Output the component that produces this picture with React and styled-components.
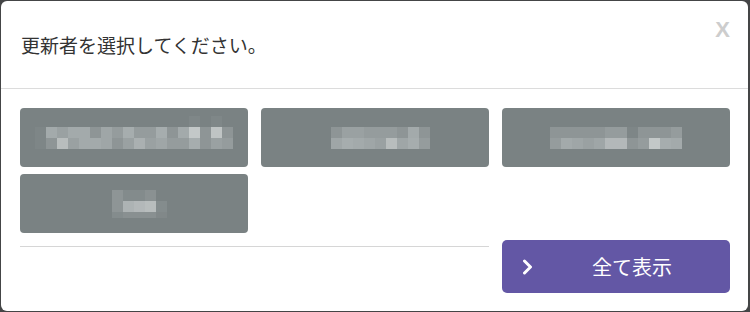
import React from 'react'
import styled, { createGlobalStyle } from 'styled-components'

const GlobalStyle = createGlobalStyle`
  html, body {
    margin: 0;
    padding: 0;
    background: #444546;
  }
  body {
    font-family: "Noto Sans CJK JP", "Noto Sans", sans-serif;
  }
`;

const Frame = styled.div`
  padding: 1px 2px 1px 1px;
`;

const Modal = styled.div`
  height: 310px;
  background: #fff;
  border-radius: 6px;
  display: flex;
  flex-direction: column;
  overflow: hidden;
`;

const Header = styled.div`
  height: 87px;
  display: flex;
  justify-content: space-between;
  padding: 0 18px 0 20px;
  border-bottom: 1px solid #dcdcdc;
`;

const Title = styled.h2`
  margin: 0;
  align-self: center;
  font-size: 19px;
  font-weight: 400;
  color: #333;
`;

const Close = styled.span`
  margin-top: 18px;
  font-family: "Liberation Sans", Arial, sans-serif;
  font-weight: 700;
  font-size: 22px;
  line-height: 22px;
  height: 22px;
  color: #cdcdcd;
  cursor: pointer;
`;

const Body = styled.div`
  display: grid;
  grid-template-columns: repeat(3, 228px);
  grid-auto-rows: 59px;
  column-gap: 13px;
  row-gap: 7px;
  padding: 19px 0 0 19px;
`;

const UserCard = styled.div`
  background: #7a8283;
  border-radius: 4px;
  display: flex;
  align-items: center;
  justify-content: center;
  cursor: pointer;
`;

const FooterLine = styled.div`
  grid-column: span 2;
  align-self: start;
  margin-top: 6px;
  height: 1px;
  background: #d6d6d6;
`;

const ShowAll = styled.button`
  height: 53px;
  border: none;
  border-radius: 5px;
  background: #6357a5;
  color: #fff;
  display: flex;
  align-items: center;
  padding: 0 0 0 20px;
  font-family: inherit;
  cursor: pointer;
`;

const Label = styled.span`
  flex: 1;
  text-align: center;
  font-size: 20px;
  line-height: 1;
`;

// pixelated (redacted) names, null = empty cell
const Mosaic = ({ rows, cell = 11, last }) => {
  const w = rows[0].length * cell;
  const heights = rows.map((_, i) => (i === rows.length - 1 && last ? last : cell));
  const h = heights.reduce((a, b) => a + b, 0);
  let y = 0;
  return (
    <svg width={w} height={h} shapeRendering="crispEdges">
      {rows.map((row, r) => {
        const top = y;
        y += heights[r];
        return row.map((c, i) =>
          c ? <rect key={r + '-' + i} x={i * cell} y={top} width={cell} height={heights[r]} fill={c} /> : null
        );
      })}
    </svg>
  );
};

const users = [
  {
    rows: [
      [null, null, null, null, null, null, null, null, null, null, null, null, null, null, '#7f8788', null, '#7f8788', null],
      ['#7e8687', '#a3aaab', '#9aa1a2', '#a3aaab', '#a3aaab', '#8e9596', '#9fa6a7', '#959c9d', '#a6adae', '#959c9d', '#959c9d', '#a6adae', '#8e9596', '#a3aaab', '#c3c8c8', '#8e9596', '#bfc4c4', '#8e9596'],
      ['#7e8687', '#8e9596', '#b8bdbd', '#9aa1a2', '#a3aaab', '#a3aaab', '#9fa6a7', '#8e9596', '#9aa1a2', '#aab0b1', '#9aa1a2', '#9fa6a7', '#959c9d', '#959c9d', '#a6adae', '#8e9596', '#9aa1a2', '#959c9d'],
      Array(18).fill(null),
    ],
  },
  {
    rows: [
      [null, '#8e9596', '#9aa1a2', '#9aa1a2', '#959c9d', '#959c9d', '#959c9d', '#8e9596', '#a3aaab', '#8e9596'],
      [null, '#9fa6a7', '#a6adae', '#a3aaab', '#9fa6a7', '#9aa1a2', '#b8bdbd', '#9fa6a7', '#a6adae', '#959c9d'],
    ],
  },
  {
    rows: [
      ['#8e9596', '#8e9596', '#8e9596', '#8e9596', '#8e9596', '#959c9d', '#959c9d', '#7e8687', '#8e9596', '#8e9596', '#8e9596', '#959c9d'],
      ['#959c9d', '#a3aaab', '#9fa6a7', '#9aa1a2', '#9fa6a7', '#b3b8b9', '#b3b8b9', '#8e9596', '#959c9d', '#c3c8c8', '#a6adae', '#a3aaab'],
    ],
  },
  {
    rows: [
      [null, '#8e9596', '#838b8c', '#838b8c', '#8a9192', null],
      [null, '#8e9596', '#adb3b4', '#b3b8b9', '#b8bdbd', '#848c8d'],
      [null, '#848c8d', '#899091', '#899091', '#899091', '#818889'],
    ],
    last: 6,
  },
];

const Chevron = () => (
  <svg width="12" height="16" viewBox="0 0 12 16">
    <path d="M2.5 2 L8.5 8 L2.5 14" fill="none" stroke="#fff" strokeWidth="3" strokeLinecap="round" strokeLinejoin="round" />
  </svg>
);

export default function App() {
  return (
    <>
      <GlobalStyle />
      <Frame>
        <Modal>
          <Header>
            <Title>更新者を選択してください。</Title>
            <Close>X</Close>
          </Header>
          <Body>
            {users.map((u, i) => (
              <UserCard key={i}>
                <Mosaic rows={u.rows} last={u.last} />
              </UserCard>
            ))}
            <div />
            <div />
            <FooterLine />
            <ShowAll>
              <Chevron />
              <Label>全て表示</Label>
            </ShowAll>
          </Body>
        </Modal>
      </Frame>
    </>
  )
}
